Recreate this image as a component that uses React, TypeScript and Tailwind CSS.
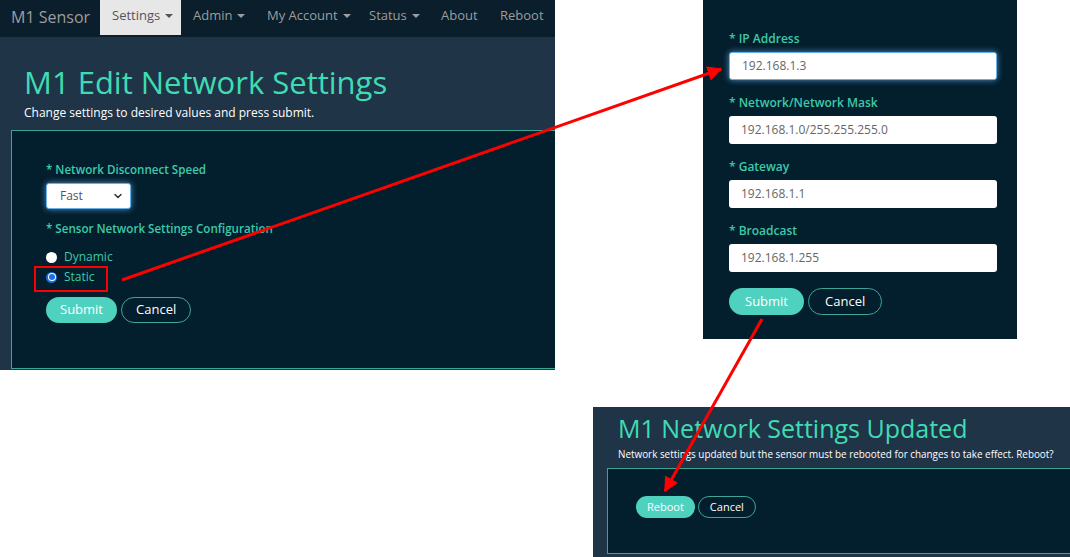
import React from 'react';
import { ChevronDown } from 'lucide-react';

const font = { fontFamily: '"Open Sans", "Noto Sans", sans-serif' };

function Caret({ dark = false }: { dark?: boolean }) {
  return (
    <span
      className={`ml-[5px] inline-block w-0 h-0 border-x-[4px] border-x-transparent border-t-[4px] ${dark ? 'border-t-[#555]' : 'border-t-[#9d9d9d]'}`}
    />
  );
}

function PillButton({ label, primary = false, size = 'md' }: { label: string; primary?: boolean; size?: 'sm' | 'md' | 'lg' }) {
  const sizes = {
    sm: 'h-[22px] text-[11px] px-[11px]',
    md: 'h-[26px] text-[13px] px-[14px]',
    lg: 'h-[27px] text-[13px] px-[16px]',
  };
  return primary ? (
    <button className={`${sizes[size]} rounded-full bg-[#4fd1c0] text-white whitespace-nowrap`}>{label}</button>
  ) : (
    <button className={`${sizes[size]} rounded-full border border-[#3fa596] text-white bg-transparent whitespace-nowrap`}>{label}</button>
  );
}

function NetworkForm() {
  const navItems = [
    { name: 'Admin', w: 'w-[74px]' },
    { name: 'My Account', w: 'w-[102px]' },
    { name: 'Status', w: 'w-[72px]' },
  ];
  return (
    <div className="absolute left-0 top-0 w-[555px] h-[370px] bg-[#1f3447] flex flex-col overflow-hidden" style={font}>
      <div className="h-[37px] shrink-0 bg-[#0a1e2b] flex items-stretch text-[13px] text-[#9d9d9d] whitespace-nowrap pb-[2px]">
        <div className="w-[100px] shrink-0 pl-[11px] pb-[2px] flex items-center text-[16px]">M1 Sensor</div>
        <div className="w-[81px] shrink-0 bg-[#e7e7e7] text-[#555] flex items-center pl-[12px] pb-[3px]">
          Settings
          <Caret dark />
        </div>
        {navItems.map((n) => (
          <div key={n.name} className={`${n.w} shrink-0 pl-[12px] pb-[3px] flex items-center`}>
            {n.name}
            <Caret />
          </div>
        ))}
        <div className="w-[59px] shrink-0 pl-[12px] pb-[3px] flex items-center">About</div>
        <div className="w-[67px] shrink-0 pl-[12px] pb-[3px] flex items-center">Reboot</div>
      </div>
      <div className="pl-[24px] mt-[27px] text-[31px] leading-[36px] text-[#3fdcb4] whitespace-nowrap">M1 Edit Network Settings</div>
      <div className="pl-[24px] mt-[4px] text-[12px] leading-[18px] text-white">Change settings to desired values and press submit.</div>
      <div className="ml-[11px] mt-[8px] flex-1 mb-[1px] border border-r-0 border-[#3aa596] bg-[#031e2d] pl-[34px] pt-[30px]">
        <div className="text-[11.6px] leading-[18px] font-semibold text-[#3ccaa9]">* Network Disconnect Speed</div>
        <div className="mt-[4px] w-[85px] h-[26px] rounded-[3px] bg-white border border-[#66afe9] shadow-[0_0_6px_rgba(102,175,233,0.8)] flex items-center justify-between pl-[13px] pr-[6px] text-[12px] text-[#555]">
          Fast
          <ChevronDown size={12} strokeWidth={3} className="text-[#333]" />
        </div>
        <div className="mt-[11px] text-[11.6px] leading-[18px] font-semibold text-[#3ccaa9]">* Sensor Network Settings Configuration</div>
        <div className="mt-[10px] flex items-center gap-[7px] text-[12px] leading-[18px] text-[#3ccaa9]">
          <span className="w-[11px] h-[11px] rounded-full bg-white" />
          Dynamic
        </div>
        <div className="mt-[2px] flex items-center gap-[7px] text-[12px] leading-[18px] text-[#3ccaa9]">
          <span className="w-[11px] h-[11px] rounded-full bg-[#1670e8] flex items-center justify-center">
            <span className="w-[8px] h-[8px] rounded-full bg-white flex items-center justify-center">
              <span className="w-[6px] h-[6px] rounded-full bg-[#1670e8]" />
            </span>
          </span>
          Static
        </div>
        <div className="mt-[11px] flex gap-[4px]">
          <PillButton label="Submit" primary />
          <PillButton label="Cancel" />
        </div>
      </div>
    </div>
  );
}

function StaticFields() {
  const fields = [
    { label: '* IP Address', value: '192.168.1.3', focus: true },
    { label: '* Network/Network Mask', value: '192.168.1.0/255.255.255.0', focus: false },
    { label: '* Gateway', value: '192.168.1.1', focus: false },
    { label: '* Broadcast', value: '192.168.1.255', focus: false },
  ];
  return (
    <div className="absolute left-[703px] top-0 w-[314px] h-[339px] bg-[#031e2d] pl-[26px] pt-[30px]" style={font}>
      {fields.map((f, i) => (
        <div key={f.label} className={i > 0 ? 'mt-[14px]' : ''}>
          <div className="text-[12px] leading-[18px] font-semibold text-[#3ccaa9]">{f.label}</div>
          <div
            className={`mt-[4px] w-[268px] h-[28px] rounded-[3px] bg-white flex items-center pl-[12px] text-[12px] text-[#666] ${
              f.focus ? 'border border-[#66afe9] shadow-[0_0_6px_rgba(102,175,233,0.8)]' : ''
            }`}
          >
            {f.value}
          </div>
        </div>
      ))}
      <div className="mt-[16px] flex gap-[4px]">
        <PillButton label="Submit" primary size="lg" />
        <PillButton label="Cancel" size="lg" />
      </div>
    </div>
  );
}

function UpdatedPanel() {
  return (
    <div className="absolute left-[593px] top-[407px] w-[477px] h-[150px] bg-[#1f3447] flex flex-col overflow-hidden" style={font}>
      <div className="pl-[25px] mt-[6px] text-[25px] leading-[30px] text-[#3fdcb4] whitespace-nowrap">M1 Network Settings Updated</div>
      <div className="pl-[25px] mt-[4px] text-[9.9px] leading-[14px] text-white whitespace-nowrap">
        Network settings updated but the sensor must be rebooted for changes to take effect. Reboot?
      </div>
      <div className="ml-[14px] mt-[7px] h-[86px] border border-r-0 border-[#3aa596] bg-[#031e2d] pl-[28px] pt-[27px]">
        <div className="flex gap-[3px]">
          <PillButton label="Reboot" primary size="sm" />
          <PillButton label="Cancel" size="sm" />
        </div>
      </div>
    </div>
  );
}

export default function App() {
  return (
    <div className="relative w-[1070px] h-[557px] bg-white overflow-hidden">
      <NetworkForm />
      <StaticFields />
      <UpdatedPanel />
      <svg className="absolute inset-0 pointer-events-none" width="1070" height="557">
        <defs>
          <marker id="head" viewBox="0 0 10 10" refX="9" refY="5" markerWidth="5" markerHeight="5" orient="auto">
            <path d="M0 0 L10 5 L0 10 Z" fill="#ff0000" />
          </marker>
        </defs>
        <rect x="35" y="267" width="72" height="24" fill="none" stroke="#ff0000" strokeWidth="2" />
        <line x1="122" y1="280" x2="721" y2="69" stroke="#ff0000" strokeWidth="3" markerEnd="url(#head)" />
        <line x1="762" y1="319" x2="665" y2="491" stroke="#ff0000" strokeWidth="3" markerEnd="url(#head)" />
      </svg>
    </div>
  );
}
